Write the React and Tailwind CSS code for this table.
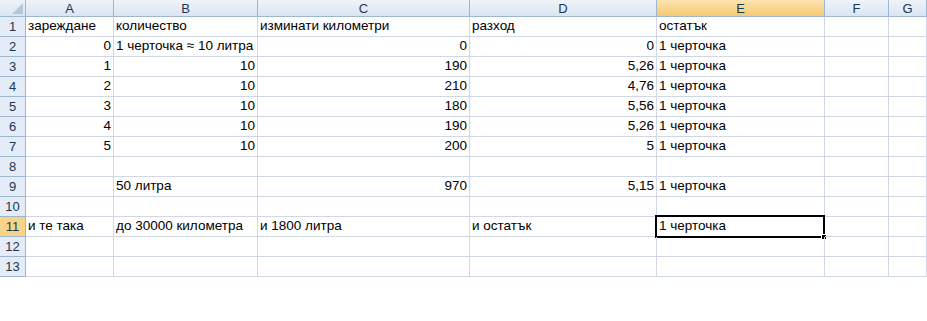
import React from "react";

const cols = ["A", "B", "C", "D", "E", "F", "G"];

const data = [
  [["зареждане", "l"], ["количество", "l"], ["изминати километри", "l"], ["разход", "l"], ["остатък", "l"]],
  [["0", "r"], ["1 черточка ≈ 10 литра", "l"], ["0", "r"], ["0", "r"], ["1 черточка", "l"]],
  [["1", "r"], ["10", "r"], ["190", "r"], ["5,26", "r"], ["1 черточка", "l"]],
  [["2", "r"], ["10", "r"], ["210", "r"], ["4,76", "r"], ["1 черточка", "l"]],
  [["3", "r"], ["10", "r"], ["180", "r"], ["5,56", "r"], ["1 черточка", "l"]],
  [["4", "r"], ["10", "r"], ["190", "r"], ["5,26", "r"], ["1 черточка", "l"]],
  [["5", "r"], ["10", "r"], ["200", "r"], ["5", "r"], ["1 черточка", "l"]],
  [],
  [["", "l"], ["50 литра", "l"], ["970", "r"], ["5,15", "r"], ["1 черточка", "l"]],
  [],
  [["и те така", "l"], ["до 30000 километра", "l"], ["и 1800 литра", "l"], ["и остатък", "l"], ["1 черточка", "l"]],
  [],
  [],
];

function ColHeader({ label, active }) {
  return (
    <div
      className={
        "h-[17px] border-r border-b border-[#9eb6ce] flex items-center justify-center text-[13px] leading-none text-[#1e3550] " +
        (active
          ? "bg-gradient-to-b from-[#fbe3b0] to-[#f6c96f]"
          : "bg-gradient-to-b from-[#eef3fa] to-[#dbe5f2]")
      }
    >
      {label}
    </div>
  );
}

function RowHeader({ n, active }) {
  return (
    <div
      className={
        "h-[20px] border-r border-b border-[#9eb6ce] flex items-center justify-center text-[13px] leading-none text-[#1e3550] " +
        (active ? "bg-[#f8d48a]" : "bg-[#e4ecf7]")
      }
    >
      {n}
    </div>
  );
}

export default function App() {
  return (
    <div
      className="w-[927px] h-[321px] bg-white overflow-hidden"
      style={{ fontFamily: '"Liberation Sans", Arial, sans-serif' }}
    >
      <div className="grid grid-cols-[26px_88px_144px_212px_187px_168px_64px_1fr]">
        <div className="h-[17px] border-r border-b border-[#9eb6ce] bg-gradient-to-b from-[#eef3fa] to-[#dbe5f2] relative">
          <svg className="absolute right-[2px] bottom-[2px]" width="11" height="11" viewBox="0 0 11 11">
            <polygon points="11,0 11,11 0,11" fill="#b4c6dc" />
          </svg>
        </div>
        {cols.map((c) => (
          <ColHeader key={c} label={c} active={c === "E"} />
        ))}
        {data.map((row, ri) => (
          <React.Fragment key={ri}>
            <RowHeader n={ri + 1} active={ri === 10} />
            {cols.map((c, ci) => {
              const cell = row[ci];
              const text = cell ? cell[0] : "";
              const align = cell && cell[1] === "r" ? "justify-end" : "justify-start";
              const selected = ri === 10 && ci === 4;
              return (
                <div
                  key={c}
                  className={
                    "h-[20px] border-r border-b border-[#d0d7e5] flex items-end pb-[2px] px-[2px] text-[13.5px] leading-[16px] text-black whitespace-nowrap relative " +
                    align
                  }
                >
                  {text}
                  {selected && (
                    <div className="absolute left-[-2px] top-[-2px] w-[170px] h-[23px] border-2 border-black">
                      <div className="absolute right-[-4px] bottom-[-4px] w-[6px] h-[6px] bg-black border border-white" />
                    </div>
                  )}
                </div>
              );
            })}
          </React.Fragment>
        ))}
      </div>
    </div>
  );
}
